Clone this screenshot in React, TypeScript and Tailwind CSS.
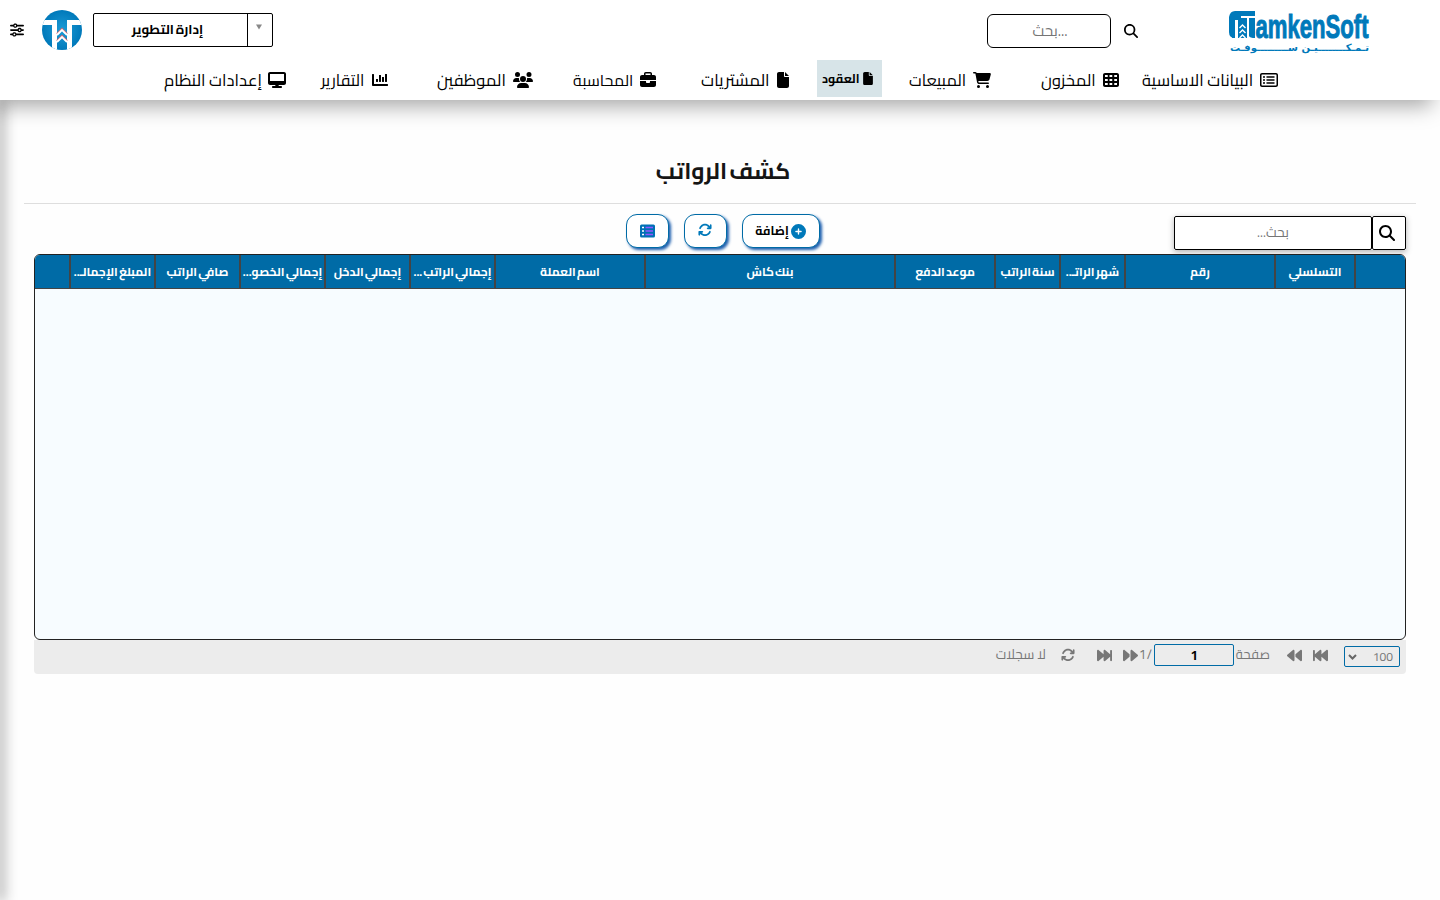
import type { ReactNode } from "react";
import {
  FaArrowsRotate, FaBackward, FaBackwardFast, FaBriefcase, FaCartShopping, FaCirclePlus, FaDesktop,
  FaFile, FaForward, FaForwardFast, FaMagnifyingGlass, FaRegRectangleList, FaSliders, FaTableCells, FaUsers,
} from "react-icons/fa6";
import { FaChartBar } from "react-icons/fa";

type NavEntry = { label: string; icon: ReactNode; box: string };

const nav: NavEntry[] = [
  { label: "البيانات الاساسية", icon: <FaRegRectangleList size={18} />, box: "w-[136px] text-[16.5px]" },
  { label: "المخزون", icon: <FaTableCells size={16} />, box: "w-[78px] ms-[23px] text-[16.4px]" },
  { label: "المبيعات", icon: <FaCartShopping size={18} />, box: "w-[82px] ms-[50px] text-[16.2px]" },
];

const navEnd: NavEntry[] = [
  { label: "المشتريات", icon: <FaFile size={16} className="w-3" />, box: "w-[88px] ms-[28px] text-[16.7px]" },
  { label: "المحاسبة", icon: <FaBriefcase size={16} />, box: "w-[83px] ms-[45px] text-[15.8px]" },
  { label: "الموظفين", icon: <FaUsers size={20} />, box: "w-[96px] ms-[40px] text-[16.5px]" },
  { label: "التقارير", icon: <FaChartBar size={16} />, box: "w-[67px] ms-[49px] text-[16.2px]" },
  { label: "إعدادات النظام", icon: <FaDesktop size={18} />, box: "w-[122px] ms-[35px] text-[16.5px]" },
];

const columns = [
  { label: "", width: "w-[51px]" },
  { label: "التسلسلي", width: "w-[80px]" },
  { label: "رقم", width: "w-[150px]" },
  { label: "شهر الراتـ..", width: "w-[65px]" },
  { label: "سنة الراتب", width: "w-[65px]" },
  { label: "موعد الدفع", width: "w-[100px]" },
  { label: "بنك كاش", width: "w-[250px]" },
  { label: "اسم العملة", width: "w-[150px]" },
  { label: "إجمالي الراتب ...", width: "w-[85px]" },
  { label: "إجمالي الدخل", width: "w-[85px]" },
  { label: "إجمالي الخصو...", width: "w-[85px]" },
  { label: "صافي الراتب", width: "w-[85px]" },
  { label: "المبلغ الإجمالـ..", width: "w-[85px]" },
  { label: "", width: "w-[34px]" },
];

function NavItem({ label, icon, box }: NavEntry) {
  return (
    <a className={`flex h-10 shrink-0 items-center justify-between whitespace-nowrap leading-[42px] ${box}`}>
      {icon}
      <span>{label}</span>
    </a>
  );
}

function Wordmark() {
  return (
    <svg width="144" height="46" viewBox="0 0 144 46" fill="#0079ba">
      <path d="M2 7Q3 1 8 1H28V6H14V10H8V28H5V10H2Z" />
      <path d="M2 10H8V28Q2 28 2 22Z" />
      <path d="M11 8H20V28H11Z" />
      <path d="M22 8H28V28Q23 28 22 26Z" />
      <path d="M12.5 18 15.5 15 18.5 18M12.5 23 15.5 20 18.5 23M12.5 28 15.5 25 18.5 28" fill="none" stroke="#fff" strokeWidth="1.4" />
      <text x="28.5" y="28" direction="ltr" fontFamily="Liberation Sans Narrow, Liberation Sans, sans-serif" fontWeight="700" fontSize="34" stroke="#0079ba" strokeWidth="1" textLength="113" lengthAdjust="spacingAndGlyphs">amkenSoft</text>
      <text x="142" y="41" direction="rtl" fontFamily="DejaVu Sans, sans-serif" fontWeight="700" fontSize="10" textLength="139" lengthAdjust="spacingAndGlyphs">تـمـكــــــــيـن ســـــــــوفـت</text>
    </svg>
  );
}

function Emblem() {
  return (
    <svg width="40" height="40" viewBox="0 0 40 40">
      <defs>
        <radialGradient id="disc" cx=".5" cy=".5" r=".5">
          <stop offset="0" stopColor="#1c9bd6" />
          <stop offset="1" stopColor="#0079ba" />
        </radialGradient>
        <clipPath id="round"><circle cx="20" cy="20" r="20" /></clipPath>
      </defs>
      <g clipPath="url(#round)">
        <rect width="40" height="40" fill="url(#disc)" />
        <path d="M0 10H15V40H10V15H0ZM40 10H25V40H30V15H40Z" fill="#fff" />
        <path d="M15 24 20 19 25 24M15 31 20 26 25 31" fill="none" stroke="#c96a75" strokeWidth="2.2" />
        <path d="M15 25 20 20 25 25M15 32 20 27 25 32" fill="none" stroke="#fff" strokeWidth="1.8" />
      </g>
    </svg>
  );
}

function ListIcon() {
  return (
    <svg width="16" height="14" viewBox="0 0 16 14">
      <rect width="15" height="13" y=".5" rx="1.5" fill="#0070b5" />
      <path d="M5.5 3.5H13M5.5 7H13M5.5 10.5H13" stroke="#9155ff" strokeWidth="1.3" />
      <path d="M2 3.5H4M2 7H4M2 10.5H4" stroke="#fff" strokeWidth="1.3" />
    </svg>
  );
}

const toolButton = "flex h-[34px] items-center justify-center rounded-[11px] border border-[#006ba6] bg-white shadow-[2px_2px_3px_#1d5fae]";

export default function App() {
  return (
    <div dir="rtl" className="flex h-[900px] w-[1440px] flex-col overflow-hidden bg-[#fefefe] font-['Cairo','Noto_Sans','DejaVu_Sans',sans-serif] text-black">
      <header className="relative z-10 h-[100px] shrink-0 bg-white shadow-[-8px_6px_20px_rgba(0,0,0,0.35)]">
        <div className="flex h-[60px] items-start">
          <div className="ms-[69px] mt-[10px]"><Wordmark /></div>
          <FaMagnifyingGlass size={14} className="ms-[89px] mt-6" />
          <div className="ms-[13px] mt-[14px] flex h-[34px] w-[124px] items-center justify-center rounded-md border border-black pl-[2px] text-[15px] leading-8 text-[#757575]">
            <span dir="ltr">بحث...</span>
          </div>
          <div className="ms-[714px] mt-[13px] flex h-[34px] w-[180px] rounded-xs border border-black">
            <div className="flex w-[25px] justify-center border-e border-black pt-[8px] pr-[2px]">
              <svg width="8" height="8" viewBox="0 0 8 8"><path d="M1 2.5H7L4 7.5Z" fill="#888" /></svg>
            </div>
            <div className="flex-1 pr-[6px] text-center text-[13.2px] leading-[31px] font-bold [word-spacing:-1px]">إدارة التطوير</div>
          </div>
          <div className="ms-[11px] mt-[10px]"><Emblem /></div>
          <FaSliders size={14} className="ms-[18px] mt-[23px]" />
        </div>
        <nav className="flex h-10 items-center pr-[162px]">
          {nav.map((n) => <NavItem key={n.label} {...n} />)}
          <a className="ms-[27px] flex h-[37px] w-[65px] shrink-0 items-center justify-between self-start bg-[#d7e4e8] pr-[9px] pl-[5px] text-[12.2px] leading-[37px] font-bold whitespace-nowrap">
            <FaFile size={13} className="w-[10px]" />
            <span>العقود</span>
          </a>
          {navEnd.map((n) => <NavItem key={n.label} {...n} />)}
        </nav>
      </header>

      <div className="flex min-h-0 flex-1" dir="ltr">
        <div className="w-0 shadow-[0_0_14px_2px_rgba(0,0,0,0.7)]" />
        <main dir="rtl" className="flex flex-1 flex-col">
          <h1 className="mx-6 h-[104px] border-b border-[#dedede] pt-[51px] pl-[2px] text-center text-[22.8px] leading-10 font-bold text-[#151515] [word-spacing:-3px]"><span className="relative left-[2px]">كشف الرواتب</span></h1>
          <div className="flex h-[50px] items-start pr-[34px]">
            <div className="mt-3 flex h-[34px] w-[232px] bg-white shadow-[0_2px_6px_rgba(0,0,0,0.3)]">
              <div className="flex w-[34px] items-center rounded-xs border border-black pr-[10px]"><FaMagnifyingGlass size={16} /></div>
              <div className="flex-1 rounded-xs border border-black text-center text-[13.6px] leading-[31px] text-[#757575]">بحث...</div>
            </div>
            <button className={`${toolButton} ms-[354px] mt-[10px] w-[78px] gap-[2px] pr-px text-[12.2px] font-bold`}>
              <FaCirclePlus size={15} color="#0079ba" />
              <span>إضافة</span>
            </button>
            <button className={`${toolButton} ms-[15px] mt-[10px] w-[43px]`}><FaArrowsRotate size={14} color="#0079ba" className="-mt-0.5 mr-0.5" /></button>
            <button className={`${toolButton} ms-[15px] mt-[10px] w-[43px]`}><ListIcon /></button>
          </div>
          <section className="mx-[34px] h-[386px] overflow-hidden rounded-md border border-[#222] bg-[#f7fcff]">
            <div className="flex h-[34px] border-b border-[#444] bg-[#006ba6]">
              {columns.map((c, i) => (
                <div key={i} className={`shrink-0 border-e-2 border-[#444] text-center text-[12px] leading-[33px] font-bold whitespace-nowrap text-white [word-spacing:-1.5px] last:border-e-0 ${c.width}`}>
                  {c.label}
                </div>
              ))}
            </div>
          </section>
          <footer className="mx-[34px] flex h-[34px] items-start rounded-b-sm bg-[#ececec] text-[13px] leading-[29px] text-[#777]">
            <div className="ms-[6px] mt-[6px] flex h-[21px] w-[56px] items-center justify-between rounded-xs border border-[#006ba6] pr-[6px] pl-[3px] text-[12px] leading-[19px]">
              <span>100</span>
              <svg width="9" height="6" viewBox="0 0 9 6"><path d="M1 1 4.5 4.5 8 1" fill="none" stroke="#666" strokeWidth="2" /></svg>
            </div>
            <FaBackwardFast size={15} className="ms-4 mt-2" />
            <FaBackward size={15} className="ms-[11px] mt-2" />
            <span className="ms-[17px] w-[34px] whitespace-nowrap">صفحة</span>
            <div className="ms-[2px] mt-1 h-[22px] w-[80px] rounded-xs border border-[#006ba6] text-center text-[13px] leading-[20px] font-bold text-black">1</div>
            <div className="ms-[2px] w-[12px] whitespace-nowrap text-[12.5px] [word-spacing:-2px]"><span dir="ltr">1 /</span></div>
            <FaForward size={15} className="ms-[2px] mt-2" />
            <FaForwardFast size={15} className="ms-[11px] mt-2" />
            <FaArrowsRotate size={14} className="ms-[22px] mt-2" />
            <span className="ms-[15px] text-[13.4px]">لا سجلات</span>
          </footer>
        </main>
      </div>
    </div>
  );
}
